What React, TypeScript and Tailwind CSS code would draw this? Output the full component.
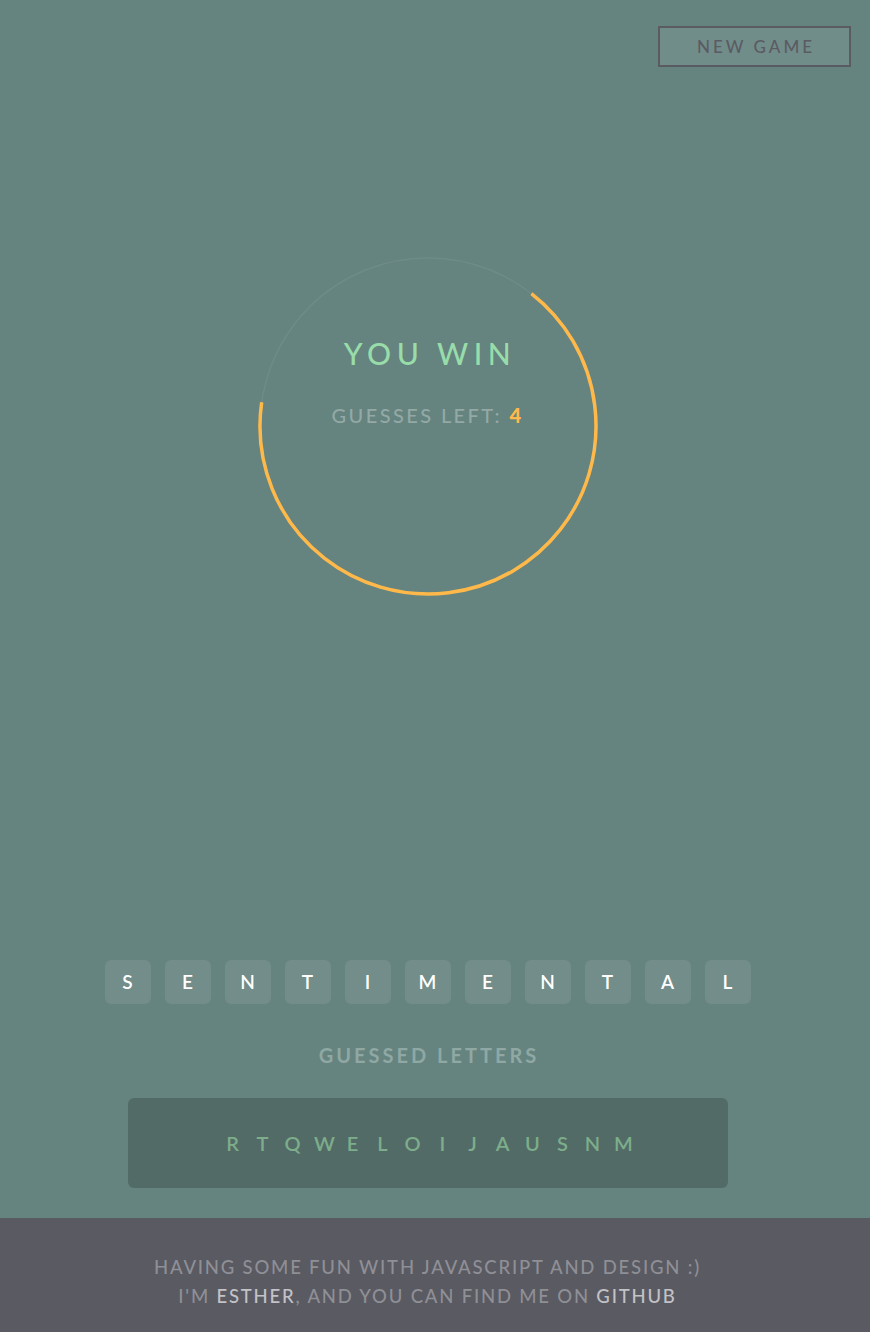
import React from 'react';

const word = 'SENTIMENTAL'.split('');
const guessed = ['R', 'T', 'Q', 'W', 'E', 'L', 'O', 'I', 'J', 'A', 'U', 'S', 'N', 'M'];

const ProgressRing: React.FC<{ progress: number }> = ({ progress }) => {
  const r = 168;
  const c = 2 * Math.PI * r;
  const len = c * progress;
  return (
    <svg width="344" height="344" viewBox="0 0 344 344" className="absolute inset-0">
      <circle cx="172" cy="172" r={r} fill="none" stroke="#6f8b88" strokeWidth="1.5" />
      <circle
        cx="172"
        cy="172"
        r={r}
        fill="none"
        stroke="#ffb94a"
        strokeWidth="3.5"
        strokeDasharray={`${len} ${c}`}
        transform="rotate(-52 172 172)"
      />
    </svg>
  );
};

const App: React.FC = () => {
  return (
    <div className="min-h-screen flex flex-col bg-[#65837f] font-['Lato','Open_Sans',sans-serif]">
      <div className="flex-1 pr-[15px]">
        {/* Header */}
        <div className="flex justify-end pt-[26px] pr-[4px]">
          <button className="w-[193px] h-[41px] border-2 border-[#5b5b63] bg-[#718d8a] text-[#5b5b63] text-[17px] font-medium tracking-[3px] pl-[3px]">
            NEW GAME
          </button>
        </div>

        {/* Status ring */}
        <div className="flex justify-center mt-[187px]">
          <div className="relative w-[344px] h-[344px]">
            <ProgressRing progress={4 / 6} />
            <div className="relative flex flex-col items-center pt-[80px]">
              <div className="text-[30px] leading-[38px] tracking-[5.5px] text-[#98dcaa] font-medium pl-[5px]">
                YOU WIN
              </div>
              <div className="mt-[31px] text-[20px] leading-[24px] tracking-[2.4px] font-medium text-[#93a9a5]">
                GUESSES LEFT: <span className="text-[#ffb94a] font-black">4</span>
              </div>
            </div>
          </div>
        </div>

        {/* Word */}
        <div className="flex justify-center gap-[14px] mt-[362px]">
          {word.map((l, i) => (
            <div
              key={i}
              className="w-[46px] h-[44px] rounded-[6px] bg-[#728d8a] flex items-center justify-center text-white text-[19px] font-semibold"
            >
              {l}
            </div>
          ))}
        </div>

        {/* Guessed letters */}
        <div className="mt-[37px] text-center text-[20px] leading-[28px] font-bold tracking-[3px] text-[#8fa8a4] pl-[3px]">
          GUESSED LETTERS
        </div>
        <div className="flex justify-center mt-[29px] mb-[30px]">
          <div className="w-[600px] h-[90px] rounded-[6px] bg-[#526b67] flex items-center justify-center gap-[13px] text-[20px] text-[#7dad8a] font-semibold">
            {guessed.map((l, i) => (
              <span key={i} className="w-[17px] text-center">
                {l}
              </span>
            ))}
          </div>
        </div>
      </div>

      {/* Footer */}
      <footer className="h-[114px] bg-[#5a5a62] pr-[15px] pt-[35px] text-center text-[18.5px] leading-[29px] tracking-[1.8px] font-medium text-[#8f8f96]">
        <div>HAVING SOME FUN WITH JAVASCRIPT AND DESIGN :)</div>
        <div>
          I'M <span className="text-[#c2c2c7]">ESTHER</span>, AND YOU CAN FIND ME ON{' '}
          <span className="text-[#c2c2c7]">GITHUB</span>
        </div>
      </footer>
    </div>
  );
};

export default App;
